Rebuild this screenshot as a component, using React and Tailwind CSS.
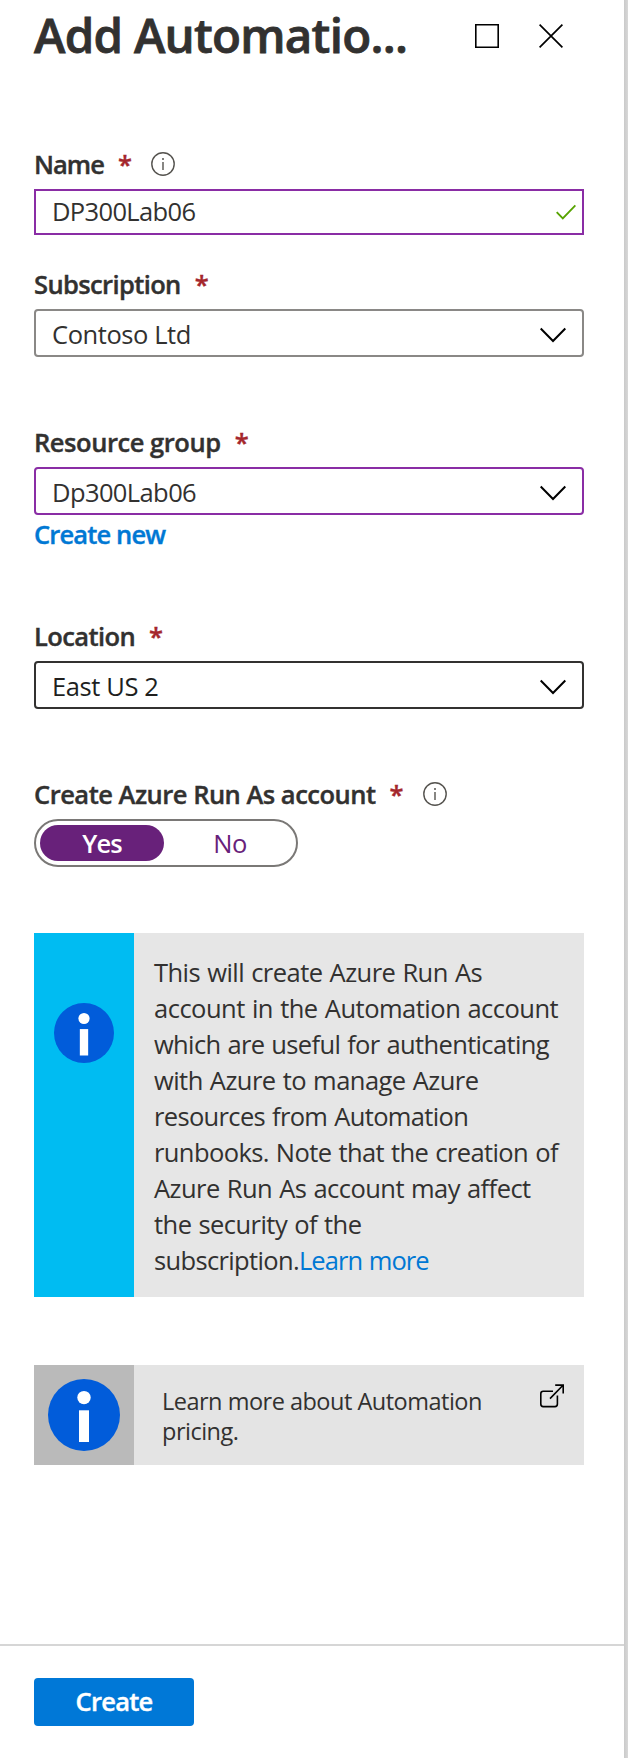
import React from "react";

function InfoGlyph() {
  return (
    <svg className="block h-6 w-6" viewBox="0 0 24 24" fill="none" stroke="#55534f" strokeWidth="1.4">
      <circle cx="12" cy="12" r="11.2" />
      <path d="M12 10V18" />
      <circle cx="12" cy="7" r="1" fill="#55534f" stroke="none" />
    </svg>
  );
}

function InfoBadge({ className }) {
  return (
    <svg className={className} viewBox="0 0 72 72">
      <circle cx="36" cy="36" r="36" fill="#015cda" />
      <circle cx="36" cy="18.6" r="6.7" fill="#fff" />
      <path d="M31 31.3h10V63H31z" fill="#fff" />
    </svg>
  );
}

function Label({ children, tracking, info }) {
  return (
    <div className="flex h-9 items-center text-[25.5px] leading-9 font-semibold whitespace-nowrap [-webkit-text-stroke:0.4px]">
      <span className={tracking}>{children}</span>
      <span className="ml-[14px] text-[#a4262c]">*</span>
      {info && <span className="ml-[19px]"><InfoGlyph /></span>}
    </div>
  );
}

function Select({ children, border, tracking }) {
  return (
    <div className={`mt-[7px] flex h-12 items-center justify-between rounded-[4px] border-2 pl-4 pr-4 text-[25.5px] ${border}`}>
      <span className={`mt-0.5 ${tracking}`}>{children}</span>
      <svg className="mt-[3px] block h-4 w-[26px]" viewBox="0 0 26 16" fill="none" stroke="#000" strokeWidth="2">
        <path d="M.7 1.5 13 14 25.3 1.5" />
      </svg>
    </div>
  );
}

export default function App() {
  return (
    <div className="flex h-[1758px] w-[628px] bg-white font-['Open_Sans',sans-serif] text-[#323130]">
      <div className="flex w-[624px] flex-col">
        <header className="flex h-[146px] items-start pl-[34px]">
          <h1 className="w-[441px] text-[47.5px] leading-[69px] font-semibold tracking-[-0.75px] whitespace-nowrap [-webkit-text-stroke:0.8px]">Add Automatio...</h1>
          <svg className="mt-6 h-6 w-6" viewBox="0 0 24 24" fill="none" stroke="#000" strokeWidth="1.6">
            <path d="M.8.8h22.4v22.4H.8z" />
          </svg>
          <svg className="mt-6 ml-[40px] h-6 w-6" viewBox="0 0 24 24" fill="none" stroke="#000" strokeWidth="1.7">
            <path d="M.6.6 23.4 23.4M23.4.6.6 23.4" />
          </svg>
        </header>

        <main className="flex flex-col pr-10 pl-[34px]">
          <Label tracking="tracking-[-0.95px]" info>Name</Label>
          <div className="mt-[7px] flex h-[46px] items-center justify-between border-2 border-[#8a2da5] pl-4 pr-[6px] text-[25.5px]">
            <span className="mb-0.5 tracking-[-0.65px]">DP300Lab06</span>
            <svg className="block h-4 w-5" viewBox="0 0 20 16" fill="none" stroke="#57a300" strokeWidth="1.9">
              <path d="M.7 8.2 6.8 14.3 19.4 1.3" />
            </svg>
          </div>

          <div className="mt-[31px]">
            <Label tracking="tracking-[-0.62px]">Subscription</Label>
            <Select border="border-[#8a8886]" tracking="tracking-[-0.42px]">Contoso Ltd</Select>
          </div>

          <div className="mt-[67px]">
            <Label tracking="tracking-[-0.45px]">Resource group</Label>
            <Select border="border-[#8a2da5]" tracking="tracking-[-0.6px]">Dp300Lab06</Select>
            <a className="mt-px block h-9 text-[25.5px] leading-9 font-semibold tracking-[-0.85px] text-[#0078d4] [-webkit-text-stroke:0.4px]">Create new</a>
          </div>

          <div className="mt-[66px]">
            <Label tracking="tracking-[-0.6px]">Location</Label>
            <Select border="border-[#323130] text-[#201f1e]" tracking="tracking-[-0.4px]">East US 2</Select>
          </div>

          <div className="mt-[67px]">
            <Label tracking="tracking-[-0.5px]" info>Create Azure Run As account</Label>
            <div className="mt-[7px] flex h-12 w-[264px] items-center rounded-full border-2 border-[#7a7876] pl-1 text-[25.5px]">
              <span className="flex h-9 w-[124px] items-center justify-center rounded-full bg-[#68217a] pt-px font-semibold tracking-[-0.9px] text-white">Yes</span>
              <span className="flex h-9 w-[132px] items-center justify-center pt-px tracking-[-0.5px] text-[#68217a]">No</span>
            </div>
          </div>

          <section className="mt-[66px] flex h-[364px] bg-[#e6e6e6]">
            <div className="flex w-[100px] justify-center bg-[#00bcf2] pt-[70px]">
              <InfoBadge className="h-[60px] w-[60px]" />
            </div>
            <p className="pt-[21px] pl-5 text-[25.5px] leading-9 tracking-[-0.5px] whitespace-nowrap [word-spacing:1px]">
              <span className="tracking-[-0.54px]">This will create Azure Run As</span><br />
              account in the Automation account<br />
              <span className="tracking-[-0.65px]">which are useful for authenticating</span><br />
              <span className="tracking-[-0.54px]">with Azure to manage Azure</span><br />
              <span className="tracking-[-0.66px]">resources from Automation</span><br />
              <span className="tracking-[-0.6px]">runbooks. Note that the creation of</span><br />
              <span className="tracking-[-0.55px]">Azure Run As account may affect</span><br />
              <span className="tracking-[-0.55px]">the security of the</span><br />
              <span className="tracking-[-0.65px]">subscription.</span><a className="tracking-[-0.95px] text-[#0078d4]">Learn more</a>
            </p>
          </section>

          <section className="mt-[68px] flex h-[100px] bg-[#e4e4e4]">
            <div className="flex w-[100px] items-center justify-center bg-[#bababa]">
              <InfoBadge className="h-[72px] w-[72px]" />
            </div>
            <p className="w-[378px] pt-[21px] pl-7 text-[23.5px] leading-[30px] tracking-[-0.5px] whitespace-nowrap">
              Learn more about Automation<br />pricing.
            </p>
            <svg className="mt-[19px] ml-7 h-6 w-6" viewBox="0 0 24 24" fill="none" stroke="#000" strokeWidth="1.6">
              <path d="M13 7.3H3.2Q.8 7.3.8 9.7V20Q.8 22.6 3.2 22.6H15Q17.4 22.6 17.4 20V11.5M10 14.6 23 1.2M15.2 1.1H23.2V9.5" />
            </svg>
          </section>
        </main>

        <footer className="mt-auto h-[114px] border-t-2 border-[#d6d6d6] pt-8 pl-[34px]">
          <button className="flex h-12 w-40 items-center justify-center rounded-[4px] bg-[#0078d7] pb-px text-[25.5px] font-semibold tracking-[-0.75px] text-white [-webkit-text-stroke:0.4px]">Create</button>
        </footer>
      </div>
      <div className="w-1 bg-linear-to-r from-[#cacaca] to-[#d8d8d8]" />
    </div>
  );
}
